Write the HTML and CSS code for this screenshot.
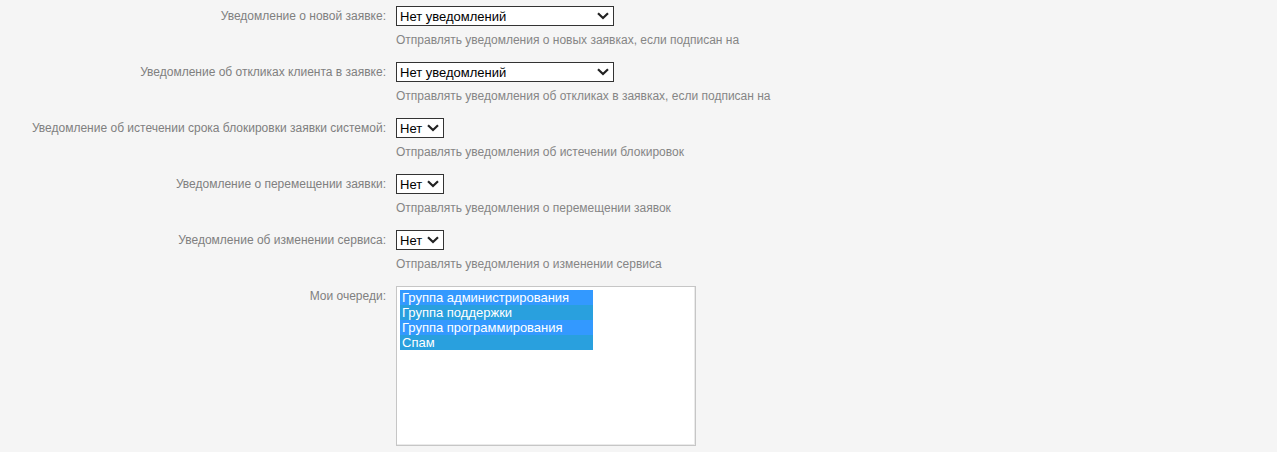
FILE: index.html
```html
<!DOCTYPE html>
<html lang="ru">
<head>
    <meta charset="UTF-8">
    <meta name="viewport" content="width=device-width, initial-scale=1.0">
    <title>Настройки уведомлений</title>
    <link rel="stylesheet" href="styles.css">
</head>
<body>
    <div class="settings">
        <div class="row">
            <label class="row-label">Уведомление о новой заявке:</label>
            <div class="row-field">
                <div class="select-box wide">
                    <select><option>Нет уведомлений</option></select>
                    <svg class="chevron" viewBox="0 0 12 8"><path d="M1 1.2 6 6 11 1.2" /></svg>
                </div>
                <p class="hint">Отправлять уведомления о новых заявках, если подписан на</p>
            </div>
        </div>
        <div class="row">
            <label class="row-label">Уведомление об откликах клиента в заявке:</label>
            <div class="row-field">
                <div class="select-box wide">
                    <select><option>Нет уведомлений</option></select>
                    <svg class="chevron" viewBox="0 0 12 8"><path d="M1 1.2 6 6 11 1.2" /></svg>
                </div>
                <p class="hint">Отправлять уведомления об откликах в заявках, если подписан на</p>
            </div>
        </div>
        <div class="row">
            <label class="row-label">Уведомление об истечении срока блокировки заявки системой:</label>
            <div class="row-field">
                <div class="select-box short">
                    <select><option>Нет</option></select>
                    <svg class="chevron" viewBox="0 0 12 8"><path d="M1 1.2 6 6 11 1.2" /></svg>
                </div>
                <p class="hint">Отправлять уведомления об истечении блокировок</p>
            </div>
        </div>
        <div class="row">
            <label class="row-label">Уведомление о перемещении заявки:</label>
            <div class="row-field">
                <div class="select-box short">
                    <select><option>Нет</option></select>
                    <svg class="chevron" viewBox="0 0 12 8"><path d="M1 1.2 6 6 11 1.2" /></svg>
                </div>
                <p class="hint">Отправлять уведомления о перемещении заявок</p>
            </div>
        </div>
        <div class="row">
            <label class="row-label">Уведомление об изменении сервиса:</label>
            <div class="row-field">
                <div class="select-box short">
                    <select><option>Нет</option></select>
                    <svg class="chevron" viewBox="0 0 12 8"><path d="M1 1.2 6 6 11 1.2" /></svg>
                </div>
                <p class="hint">Отправлять уведомления о изменении сервиса</p>
            </div>
        </div>
        <div class="row">
            <label class="row-label">Мои очереди:</label>
            <div class="row-field">
                <div class="multi-select">
                    <div class="queue-list">
                        <div class="queue">Группа администрирования</div>
                        <div class="queue">Группа поддержки</div>
                        <div class="queue">Группа программирования</div>
                        <div class="queue">Спам</div>
                    </div>
                </div>
            </div>
        </div>
    </div>
</body>
</html>
```

FILE: styles.css
```css
body {
    margin: 0;
    background: #f5f5f5;
    font-family: Arial, "Liberation Sans", sans-serif;
}
.settings {
    padding-top: 6px;
}
.row {
    display: grid;
    grid-template-columns: 386px 1fr;
    column-gap: 10px;
}
.row-label {
    text-align: right;
    font-size: 12px;
    line-height: 20px;
    color: #808080;
}
.row-field {
    display: flex;
    flex-direction: column;
    align-items: flex-start;
}
.select-box {
    position: relative;
    height: 20px;
    box-sizing: border-box;
    border: 1px solid #333;
    background: #fff;
}
.select-box.wide {
    width: 218px;
}
.select-box.short {
    width: 48px;
}
.select-box select {
    appearance: none;
    -webkit-appearance: none;
    border: none;
    outline: none;
    background: transparent;
    width: 100%;
    height: 18px;
    padding: 0 0 0 3px;
    margin: 0;
    font-family: Arial, "Liberation Sans", sans-serif;
    font-size: 13px;
    color: #000;
}
.chevron {
    position: absolute;
    right: 4px;
    top: 5px;
    width: 12px;
    height: 8px;
    fill: none;
    stroke: #222;
    stroke-width: 2.2;
    pointer-events: none;
}
.hint {
    margin: 7px 0 15px;
    font-size: 12px;
    line-height: 14px;
    color: #858585;
}
.multi-select {
    width: 300px;
    height: 160px;
    box-sizing: border-box;
    border: 1px solid #c6c6c6;
    box-shadow: inset -1px -1px 0 #eaeaea;
    background: #fff;
    padding: 3px;
}
.queue-list {
    width: 193px;
}
.queue {
    height: 15px;
    line-height: 15px;
    padding-left: 2px;
    font-size: 13px;
    color: #fff;
    background: #3399ff;
}
.queue:nth-child(even) {
    background: #29a0de;
}
```
